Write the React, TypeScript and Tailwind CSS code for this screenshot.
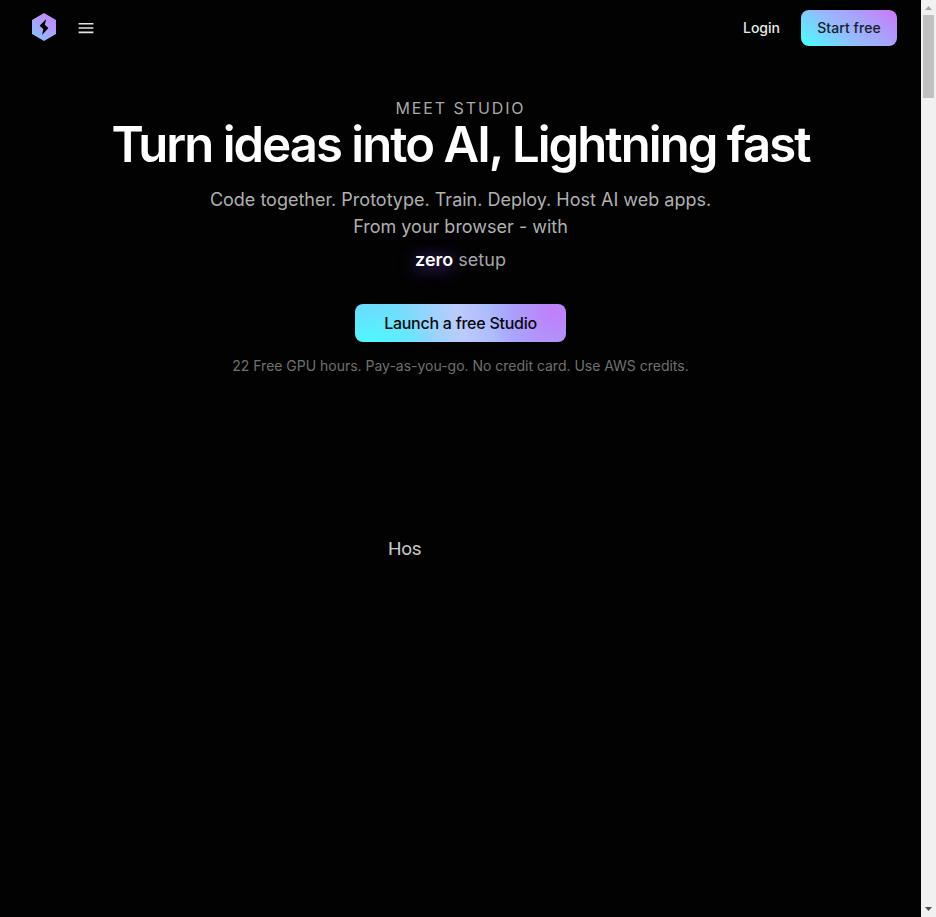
function Logo() {
  return (
    <svg width="24" height="28" viewBox="0 0 24 28" aria-label="Lightning">
      <defs>
        <linearGradient id="hex" x1="3" y1="26" x2="20" y2="2" gradientUnits="userSpaceOnUse">
          <stop offset="0" stopColor="#86c0fa" />
          <stop offset="0.45" stopColor="#a9a5fb" />
          <stop offset="1" stopColor="#c586fa" />
        </linearGradient>
      </defs>
      <path d="M12 0 24 7v14l-12 7L0 21V7Z" fill="url(#hex)" />
      <path d="M14.2 6 7.6 12.8l3.7 3.3-1.2 5.8 6.3-7-3.6-3.2Z" fill="#020204" />
    </svg>
  );
}

function MenuIcon() {
  return (
    <svg width="16" height="12" viewBox="0 0 16 12" fill="#e4e4e4">
      <path d="M.6 1h14.8v1.6H.6zM.6 5.2h14.8v1.6H.6zM.6 9.6h14.8v1.6H.6z" />
    </svg>
  );
}

function Header() {
  return (
    <header className="flex h-14 items-center justify-between pl-8 pr-6">
      <div className="flex items-center gap-[22px]">
        <div className="-mt-0.5"><Logo /></div>
        <button aria-label="Menu"><MenuIcon /></button>
      </div>
      <div className="flex items-center gap-[21px] text-[14px] leading-5 font-medium">
        <a className="text-[#e8e8e8]">Login</a>
        <button className="h-9 w-24 rounded-lg bg-[linear-gradient(38deg,#50f8ff_5%,#99b6fd_46%,#a6a5fb_64%,#c77dfa_95%)] tracking-[0.005em] text-[#17202c]">
          Start free
        </button>
      </div>
    </header>
  );
}

function Hero() {
  return (
    <section className="flex flex-col items-center pt-[42px] text-center">
      <p className="text-[16px] leading-5 tracking-[0.119em] text-[#a8a8a8]">MEET STUDIO</p>
      <h1 className="mt-[1px] text-[49px] leading-[51px] font-semibold tracking-[-0.0395em] whitespace-nowrap text-white">
        Turn ideas into AI, Lightning fast
      </h1>
      <p className="mt-[16px] text-[18px] leading-[27px] text-[#b0b0b0]">
        Code together. Prototype. Train. Deploy. Host AI web apps.
        <br />
        From your browser - with
      </p>
      <p className="mt-[6px] text-[18px] leading-[27px] text-[#a6a6a6]">
        <span className="font-semibold text-white [text-shadow:0_2px_18px_#8458ff]">zero</span> setup
      </p>
      <button className="mt-[31px] h-[38px] w-[211px] rounded-lg bg-[radial-gradient(circle_at_94%_20%,#c07ffa_0,#c07ffa88_25px,transparent_65px),radial-gradient(ellipse_60px_36px_at_8%_100%,#50f8ff,transparent),linear-gradient(78deg,#6adcfd_4%,#72dcfd_22%,#bdcbfc_50%,#a0b0fc_74%,#a99ffb_94%)] text-[16px] font-medium tracking-[-0.016em] text-[#08090d]">
        Launch a free Studio
      </button>
      <p className="mt-[14px] text-[14px] leading-5 tracking-[-0.001em] text-[#707070]">
        22 Free GPU hours. Pay-as-you-go. No credit card. Use AWS credits.
      </p>
      <div className="mt-[161px] w-[145px] text-left font-['Roboto',sans-serif] text-[19px] leading-6 tracking-[-0.02em] text-[#c8c8c8]">Hos</div>
    </section>
  );
}

function Scrollbar() {
  return (
    <aside className="flex w-[15px] shrink-0 flex-col items-center bg-[#f1f1f1]">
      <svg width="15" height="15" viewBox="0 0 15 15"><path d="M4 10h7L7.5 6Z" fill="#a3a3a3" /></svg>
      <div className="h-[83px] w-[11px] bg-[#c1c1c1]" />
      <svg className="mt-auto" width="15" height="15" viewBox="0 0 15 15"><path d="M4 5h7L7.5 9Z" fill="#505050" /></svg>
    </aside>
  );
}

export default function App() {
  return (
    <div className="flex h-[917px] w-[936px] overflow-hidden bg-[#020202] font-['Inter',sans-serif]">
      <main className="min-w-0 flex-1">
        <Header />
        <Hero />
      </main>
      <Scrollbar />
    </div>
  );
}
